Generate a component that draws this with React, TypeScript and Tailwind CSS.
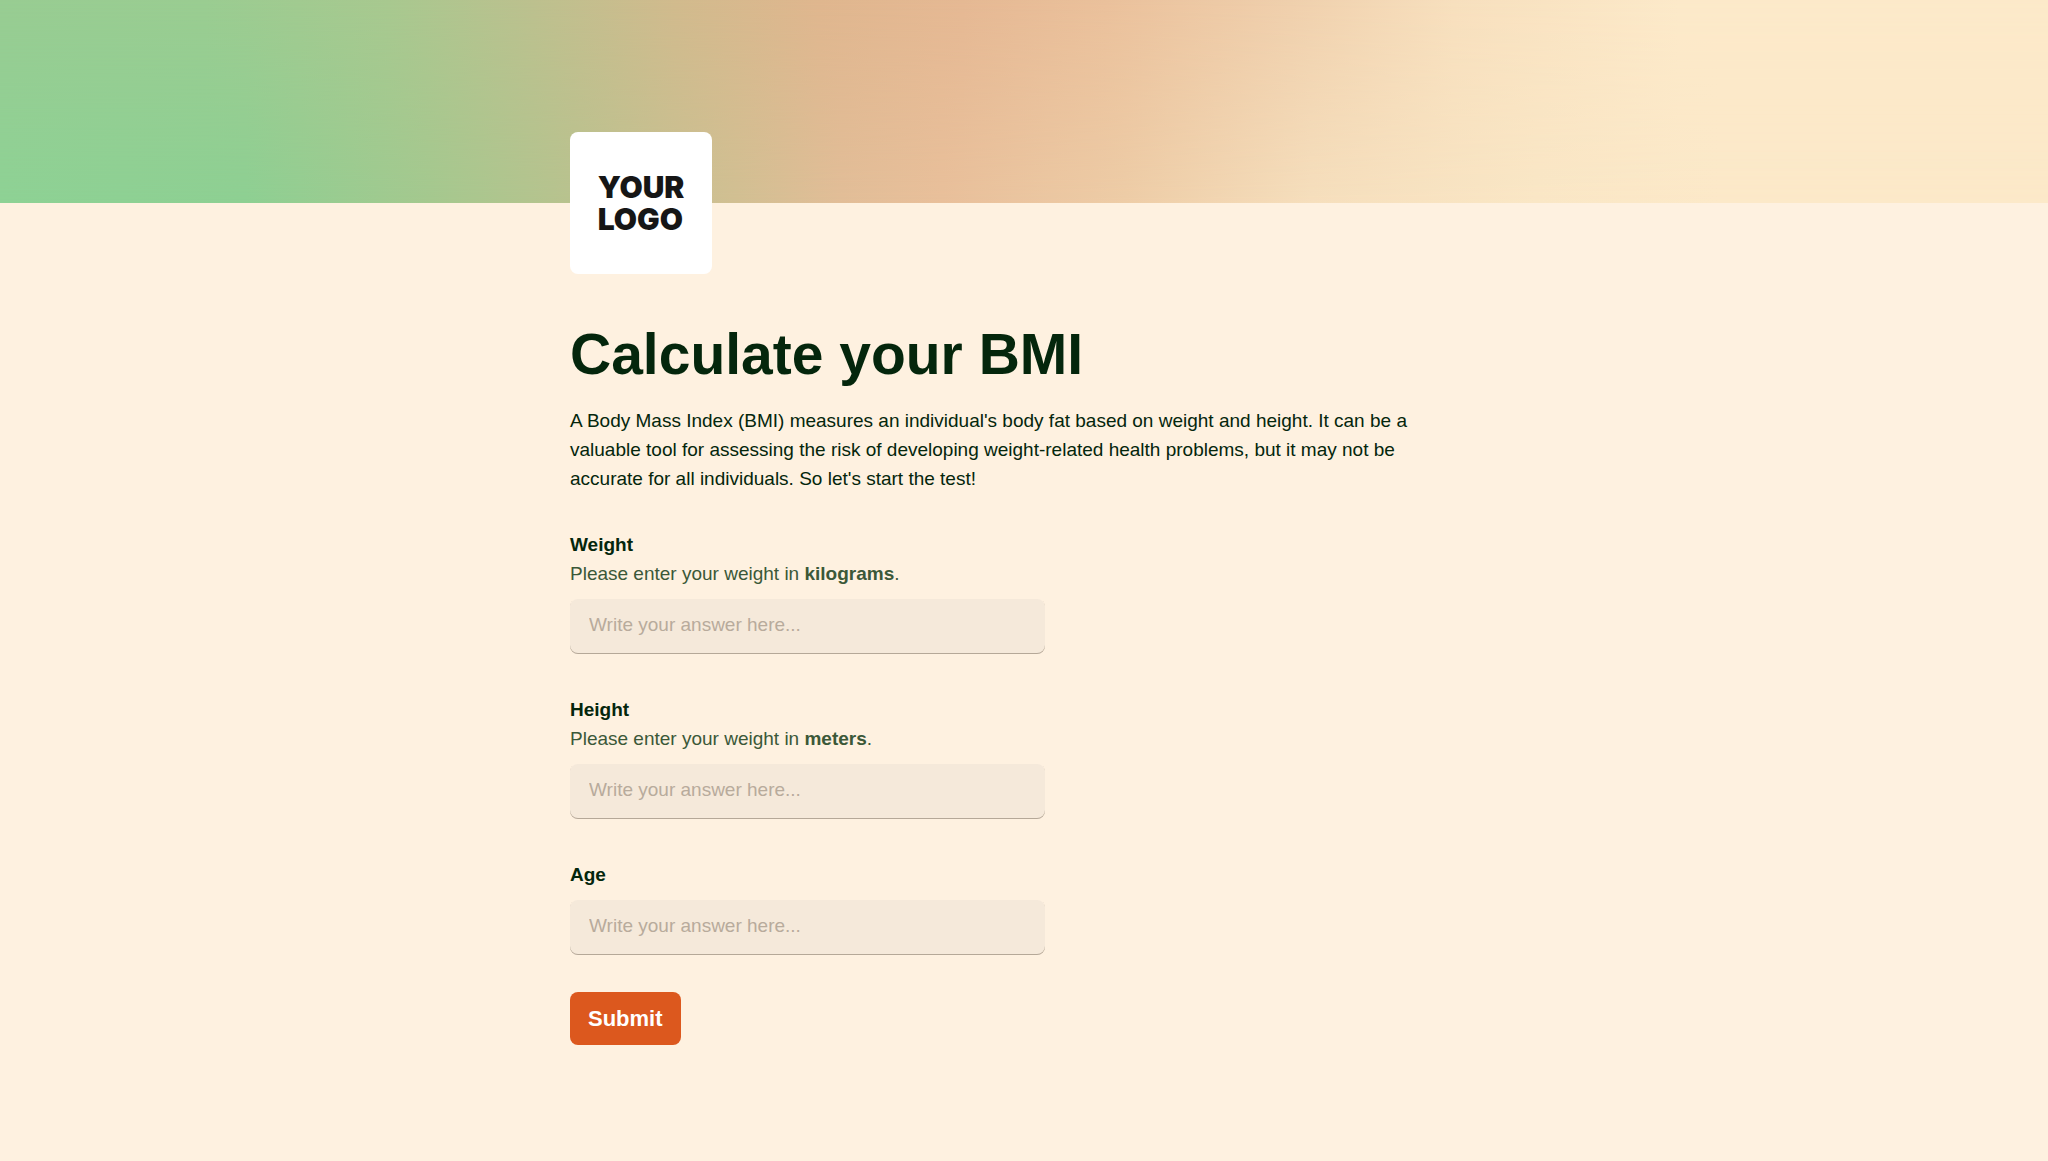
import { useId } from "react";
import type { ReactNode } from "react";

type FieldProps = {
  label: string;
  hint?: ReactNode;
};

function Field({ label, hint }: FieldProps) {
  const id = useId();

  return (
    <div>
      <label htmlFor={id} className="block font-bold text-[#04260c]">
        {label}
      </label>
      {hint && <p className="text-[#3b5838]">{hint}</p>}
      <input
        id={id}
        type="text"
        placeholder="Write your answer here..."
        className="mt-[11px] block h-[55px] w-full max-w-[475px] rounded-lg bg-[#f5e9da] px-[19px] pb-[3px] shadow-[inset_0_-1px_0_#b5a898] outline-none placeholder:text-[#b8ab9c]"
      />
    </div>
  );
}

function Banner() {
  return (
    <div className="relative h-[203px] bg-[linear-gradient(90deg,#8ed295_0%,#8ed093_12%,#a5c98f_21%,#b9c38f_28%,#d2c093_36%,#e2be98_41%,#e9c09b_46%,#eecda7_55%,#f6dfbd_64%,#fae7c6_75%,#fce9c9_84%)]">
      <div className="absolute inset-0 bg-[linear-gradient(90deg,#98cc92_0%,#9acc91_10%,#a8c88f_19%,#bcc08e_26%,#d1ba8d_33%,#dfb68e_40%,#e5b893_47%,#eac09b_54%,#efcfac_63%,#f7dfbd_71%,#fce9c9_82%)] [mask-image:linear-gradient(to_bottom,black,transparent)]" />
    </div>
  );
}

function Logo() {
  return (
    <div className="relative -mt-[71px] flex size-[142px] items-center justify-center rounded-lg bg-white">
      <p className="font-[Inter,sans-serif] text-[30px] leading-[32px] font-black text-[#161616]">
        YOUR
        <br />
        LOGO
      </p>
    </div>
  );
}

export default function App() {
  return (
    <div className="min-h-screen bg-[#fef1e0] font-['Liberation_Sans',Arial,sans-serif] text-[19px] leading-[29px] text-[#04260c]">
      <Banner />
      <main className="mx-auto max-w-[908px] pb-24">
        <Logo />
        <h1 className="mt-[46px] text-[57px] leading-[68px] font-bold">Calculate your BMI</h1>
        <p className="mt-[18px] mb-[37px] max-w-[860px]">
          A Body Mass Index (BMI) measures an individual's body fat based on weight and height. It can be a
          valuable tool for assessing the risk of developing weight-related health problems, but it may not be
          accurate for all individuals. So let's start the test!
        </p>
        <form>
          <div className="flex flex-col gap-[41px]">
            <Field
              label="Weight"
              hint={
                <>
                  Please enter your weight in <strong>kilograms</strong>.
                </>
              }
            />
            <Field
              label="Height"
              hint={
                <>
                  Please enter your weight in <strong>meters</strong>.
                </>
              }
            />
            <Field label="Age" />
          </div>
          <button
            type="submit"
            className="mt-[37px] h-[53px] rounded-lg bg-[#dc581e] px-[18px] text-[22px] font-bold text-white"
          >
            Submit
          </button>
        </form>
      </main>
    </div>
  );
}
